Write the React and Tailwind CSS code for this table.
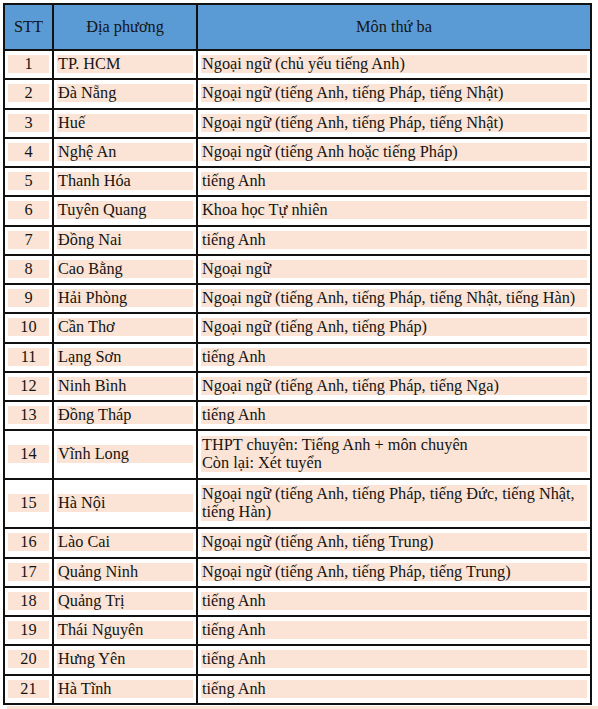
import React from "react";

const rows = [
  ["1", "TP. HCM", ["Ngoại ngữ (chủ yếu tiếng Anh)"]],
  ["2", "Đà Nẵng", ["Ngoại ngữ (tiếng Anh, tiếng Pháp, tiếng Nhật)"]],
  ["3", "Huế", ["Ngoại ngữ (tiếng Anh, tiếng Pháp, tiếng Nhật)"]],
  ["4", "Nghệ An", ["Ngoại ngữ (tiếng Anh hoặc tiếng Pháp)"]],
  ["5", "Thanh Hóa", ["tiếng Anh"]],
  ["6", "Tuyên Quang", ["Khoa học Tự nhiên"]],
  ["7", "Đồng Nai", ["tiếng Anh"]],
  ["8", "Cao Bằng", ["Ngoại ngữ"]],
  ["9", "Hải Phòng", ["Ngoại ngữ (tiếng Anh, tiếng Pháp, tiếng Nhật, tiếng Hàn)"]],
  ["10", "Cần Thơ", ["Ngoại ngữ (tiếng Anh, tiếng Pháp)"]],
  ["11", "Lạng Sơn", ["tiếng Anh"]],
  ["12", "Ninh Bình", ["Ngoại ngữ (tiếng Anh, tiếng Pháp, tiếng Nga)"]],
  ["13", "Đồng Tháp", ["tiếng Anh"]],
  ["14", "Vĩnh Long", ["THPT chuyên: Tiếng Anh + môn chuyên", "Còn lại: Xét tuyển"]],
  ["15", "Hà Nội", ["Ngoại ngữ (tiếng Anh, tiếng Pháp, tiếng Đức, tiếng Nhật,", "tiếng Hàn)"]],
  ["16", "Lào Cai", ["Ngoại ngữ (tiếng Anh, tiếng Trung)"]],
  ["17", "Quảng Ninh", ["Ngoại ngữ (tiếng Anh, tiếng Pháp, tiếng Trung)"]],
  ["18", "Quảng Trị", ["tiếng Anh"]],
  ["19", "Thái Nguyên", ["tiếng Anh"]],
  ["20", "Hưng Yên", ["tiếng Anh"]],
  ["21", "Hà Tĩnh", ["tiếng Anh"]],
];

function Cell({ multi, children }) {
  return (
    <td
      className={
        multi
          ? "border-2 border-[#111] px-[3px] pt-[5px] pb-[6px] align-middle"
          : "border-2 border-[#111] px-[3px] pt-[4px] pb-[5.25px] align-middle"
      }
    >
      {children}
    </td>
  );
}

export default function App() {
  return (
    <div
      className="w-[598px] h-[709px] bg-white pl-[3px] pt-[3px] text-[#141414]"
      style={{ fontFamily: '"Liberation Serif", "Times New Roman", serif' }}
    >
      <table className="border-collapse w-[589px] text-[16.3px] leading-[18px]">
        <colgroup>
          <col className="w-[49px]" />
          <col className="w-[144px]" />
          <col />
        </colgroup>
        <thead>
          <tr className="h-[46px] bg-[#5b9bd5]">
            <th className="border-2 border-[#111] font-normal text-center">STT</th>
            <th className="border-2 border-[#111] font-normal text-center">Địa phương</th>
            <th className="border-2 border-[#111] font-normal text-center">Môn thứ ba</th>
          </tr>
        </thead>
        <tbody>
          {rows.map(([n, place, subj]) => {
            const multi = subj.length > 1;
            return (
              <tr key={n}>
                <Cell multi={multi}>
                  <div className="bg-[#fbe4d5] text-center">{n}</div>
                </Cell>
                <Cell multi={multi}>
                  <div className="bg-[#fbe4d5] pl-[1px]">{place}</div>
                </Cell>
                <Cell multi={multi}>
                  <div className="bg-[#fbe4d5] pl-[1px]">
                    {subj.map((l, i) => (
                      <div key={i}>{l}</div>
                    ))}
                  </div>
                </Cell>
              </tr>
            );
          })}
        </tbody>
      </table>
      <div className="ml-[4px] mt-[1px] h-[3px] bg-[#fbe4d5]" />
    </div>
  );
}
